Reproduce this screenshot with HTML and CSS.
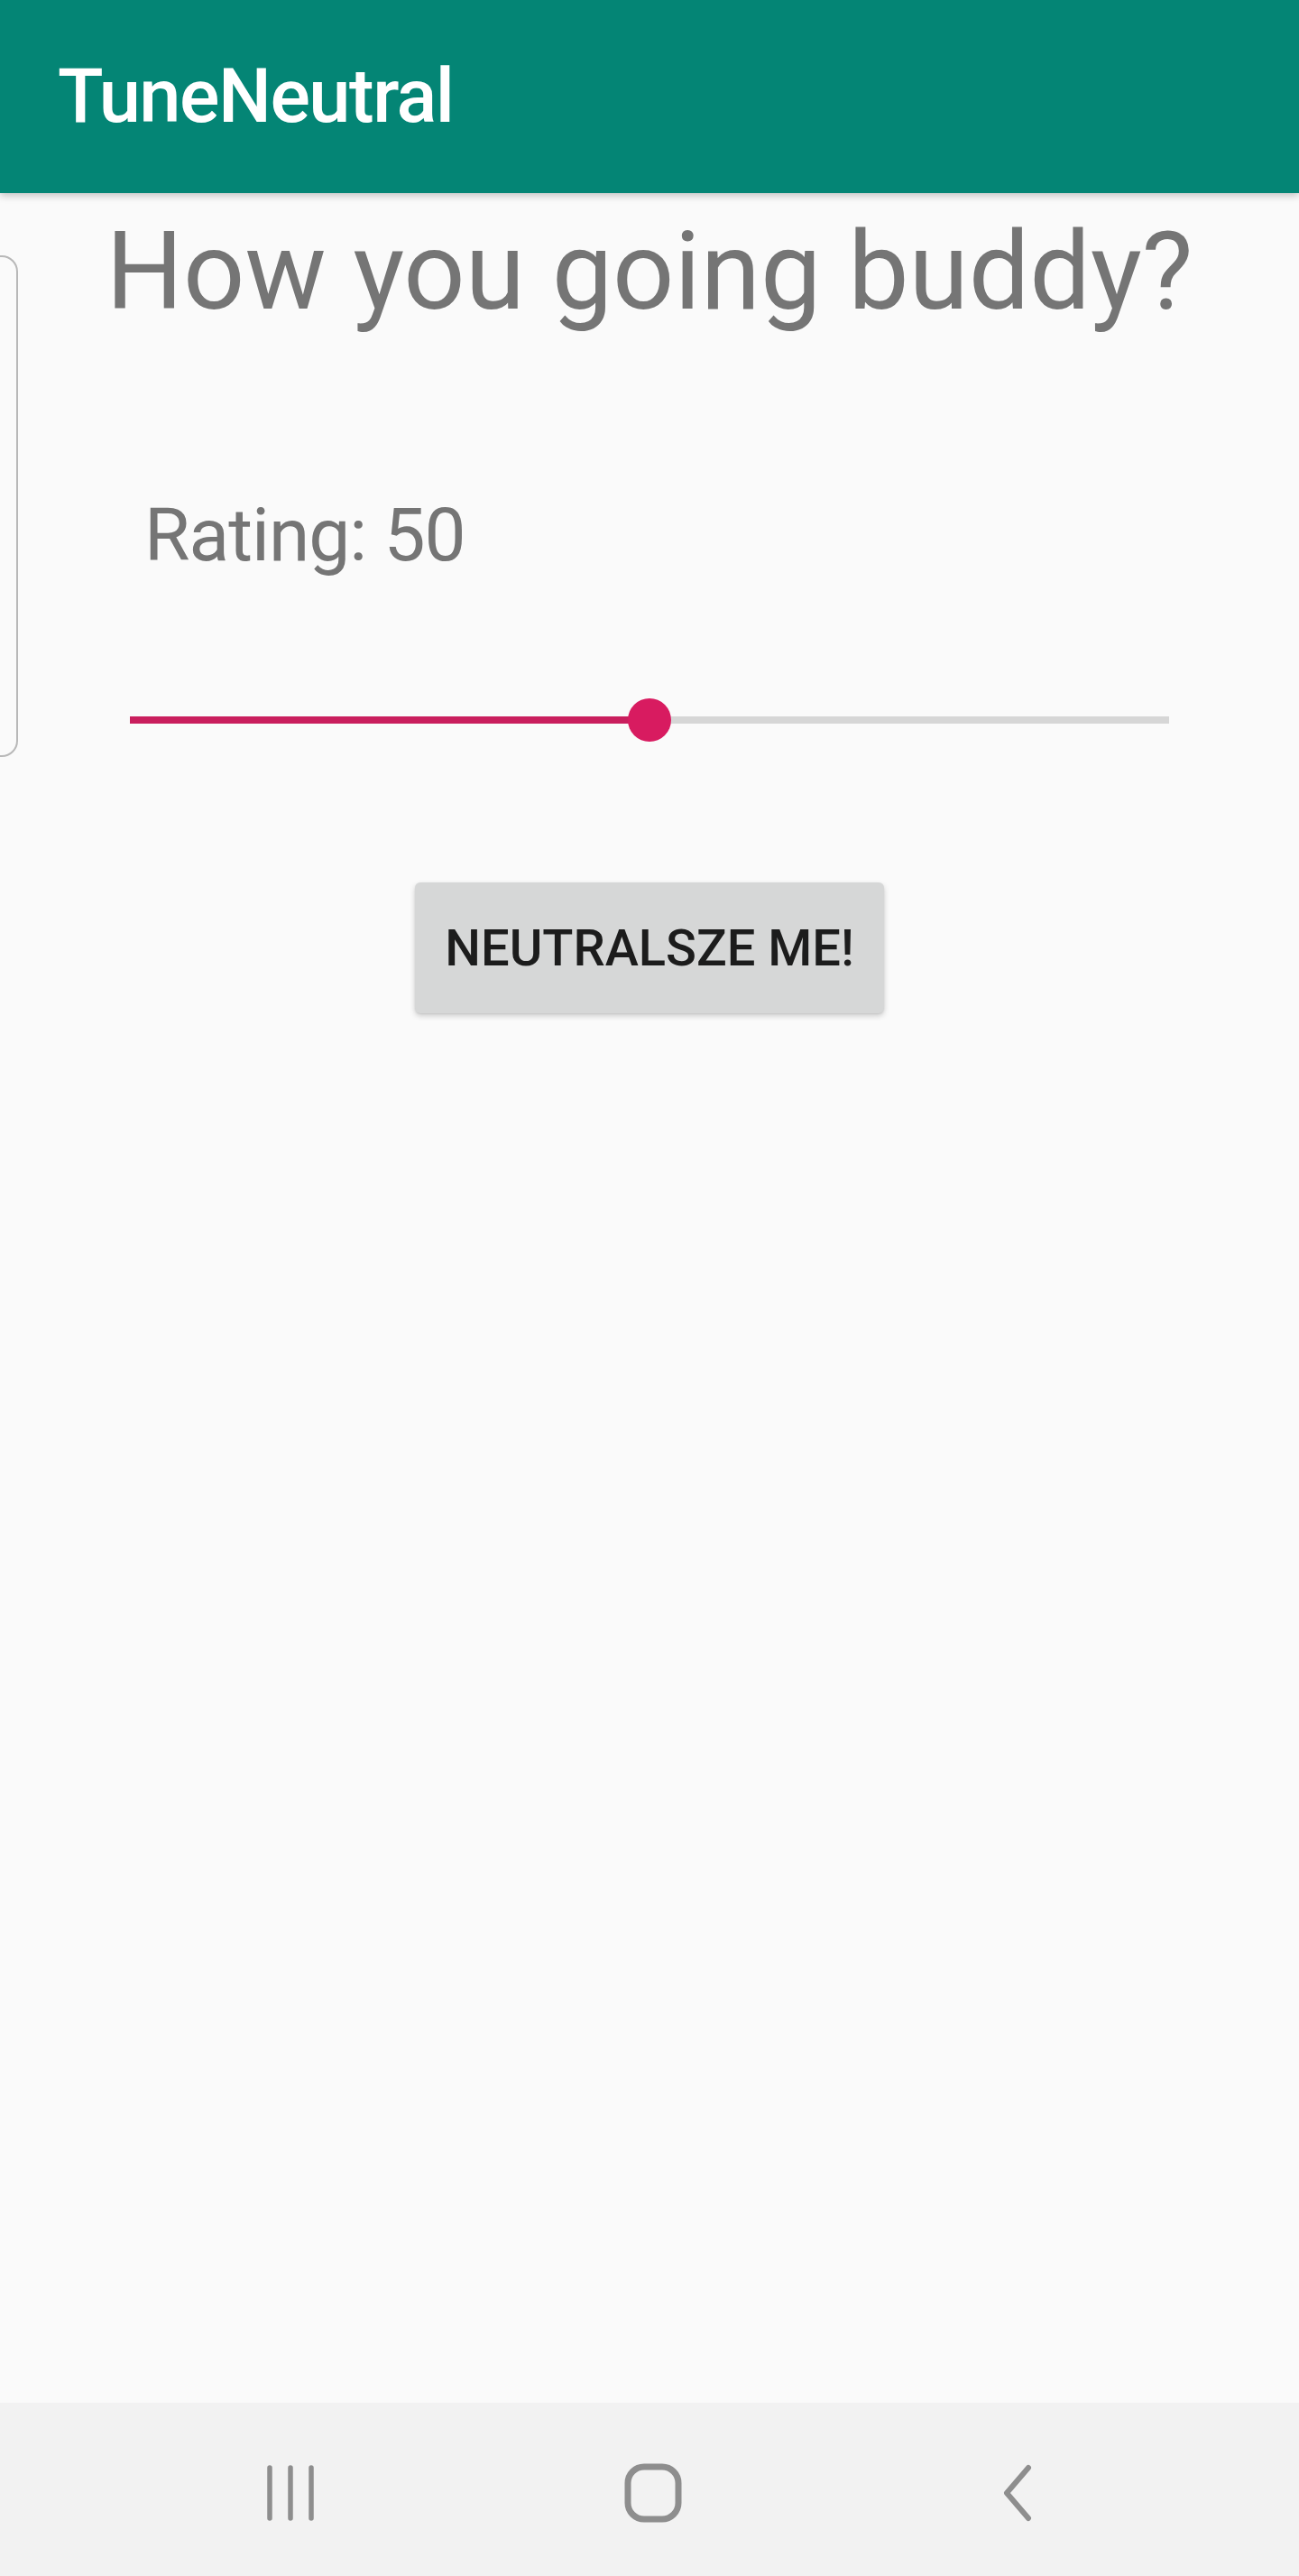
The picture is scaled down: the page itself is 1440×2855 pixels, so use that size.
FILE: index.html
```html
<!DOCTYPE html>
<html lang="en">
<head>
<meta charset="utf-8">
<title>TuneNeutral</title>
<link rel="stylesheet" href="styles.css">
</head>
<body>
<div class="screen">
  <header class="appbar">
    <h1 class="appbar-title">TuneNeutral</h1>
  </header>
  <main class="content">
    <div class="side-card"></div>
    <h2 class="question">How you going buddy?</h2>
    <p class="rating">Rating: 50</p>
    <div class="slider">
      <div class="track">
        <div class="track-active" style="width: 50%"></div>
      </div>
      <div class="thumb" style="left: 50%"></div>
    </div>
    <div class="button-row">
      <button class="neutral-btn" type="button">NEUTRALSZE ME!</button>
    </div>
  </main>
  <nav class="navbar">
    <div class="nav-item">
      <svg width="60" height="64" viewBox="0 0 60 64" aria-hidden="true">
        <g stroke="#8e8e8e" stroke-width="5.5" stroke-linecap="round" fill="none">
          <line x1="7" y1="4" x2="7" y2="60"/>
          <line x1="30" y1="4" x2="30" y2="60"/>
          <line x1="53" y1="4" x2="53" y2="60"/>
        </g>
      </svg>
    </div>
    <div class="nav-item">
      <svg width="66" height="68" viewBox="0 0 66 68" aria-hidden="true">
        <rect x="5" y="5" width="56" height="58" rx="18" ry="18" stroke="#8e8e8e" stroke-width="7" fill="none"/>
      </svg>
    </div>
    <div class="nav-item">
      <svg width="40" height="64" viewBox="0 0 40 64" aria-hidden="true">
        <polyline points="34,4 10,32 34,60" stroke="#8e8e8e" stroke-width="6" stroke-linecap="round" stroke-linejoin="round" fill="none"/>
      </svg>
    </div>
  </nav>
</div>
</body>
</html>
```

FILE: styles.css
```css
html, body {
  margin: 0;
  padding: 0;
  background: #fafafa;
}

.screen {
  width: 1440px;
  height: 2855px;
  display: flex;
  flex-direction: column;
  overflow: hidden;
  font-family: Roboto, "Noto Sans", "Liberation Sans", sans-serif;
}

.appbar {
  height: 214px;
  flex: 0 0 214px;
  background: #048575;
  display: flex;
  align-items: center;
  padding-left: 64px;
  box-shadow: 0 3px 8px rgba(0, 0, 0, 0.22);
  position: relative;
  z-index: 2;
}

.appbar-title {
  margin: 0;
  color: #ffffff;
  font-weight: 500;
  font-size: 83px;
  line-height: 98px;
  letter-spacing: -1.5px;
}

.content {
  flex: 1;
  position: relative;
  display: flex;
  flex-direction: column;
}

.side-card {
  position: absolute;
  left: -120px;
  top: 69px;
  width: 136px;
  height: 552px;
  border: 2.5px solid #b8b8b8;
  border-radius: 18px;
}

.question {
  margin: 17px 0 0;
  text-align: center;
  color: #757575;
  font-weight: 400;
  font-size: 120px;
  line-height: 140px;
}

.rating {
  margin: 174px 0 0;
  padding-left: 160px;
  color: #757575;
  font-size: 82px;
  line-height: 96px;
  letter-spacing: -1px;
}

.slider {
  position: relative;
  margin: 133px 0 0 144px;
  width: 1152px;
  height: 48px;
  display: flex;
  align-items: center;
}

.track {
  width: 100%;
  height: 8px;
  background: #d6d6d6;
}

.track-active {
  height: 100%;
  background: #c91e5d;
}

.thumb {
  position: absolute;
  top: 0;
  width: 48px;
  height: 48px;
  margin-left: -24px;
  border-radius: 50%;
  background: #d81b60;
}

.button-row {
  margin-top: 156px;
  display: flex;
  justify-content: center;
}

.neutral-btn {
  width: 520px;
  height: 145px;
  border: none;
  border-radius: 6px;
  background: #d6d7d7;
  color: #1c1c1c;
  font-family: Roboto, "Noto Sans", "Liberation Sans", sans-serif;
  font-weight: 500;
  font-size: 56px;
  letter-spacing: 0;
  padding: 0;
  box-shadow: 0 3px 6px rgba(0, 0, 0, 0.18), 0 1px 2px rgba(0, 0, 0, 0.08);
}

.navbar {
  flex: 0 0 192px;
  height: 192px;
  box-sizing: border-box;
  background: #f2f2f2;
  display: grid;
  grid-template-columns: 402px 402px 402px;
  justify-content: center;
  align-items: center;
  padding-left: 8px;
  padding-top: 8px;
}

.nav-item {
  display: flex;
  justify-content: center;
  align-items: center;
}
```
